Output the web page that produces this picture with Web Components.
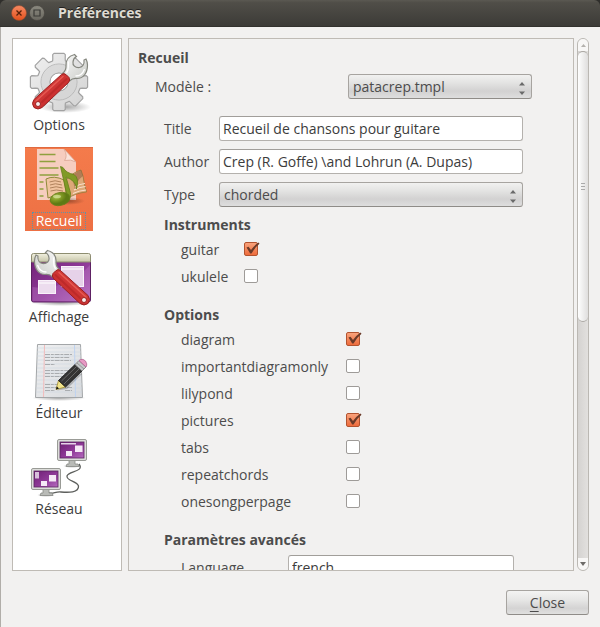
<!DOCTYPE html>
<html lang="fr">
<head>
<meta charset="utf-8">
<meta name="viewport" content="width=device-width">
<title>Préférences</title>
<style>
  html, body { margin: 0; height: 100%; background: #2f2e2b; }
  body { font: 14px/20px "Open Sans", "Noto Sans", sans-serif; color: #4c4c4c; }
</style>
</head>
<body>
<pref-window heading="Préférences">
  <pref-nav slot="nav">
    <nav-item icon="options">Options</nav-item>
    <nav-item icon="book" selected>Recueil</nav-item>
    <nav-item icon="display">Affichage</nav-item>
    <nav-item icon="editor">Éditeur</nav-item>
    <nav-item icon="network">Réseau</nav-item>
  </pref-nav>
  <scroll-frame slot="content">
    <pref-section heading="Recueil" level="1">
      <select-row label="Modèle :" value="patacrep.tmpl" compact></select-row>
    </pref-section>
    <pref-section class="fields">
      <text-row label="Title" value="Recueil de chansons pour guitare"></text-row>
      <text-row label="Author" value="Crep (R. Goffe) \and Lohrun (A. Dupas)"></text-row>
      <select-row label="Type" value="chorded"></select-row>
    </pref-section>
    <pref-section heading="Instruments" level="2" style="--label-width: 63px">
      <check-row label="guitar" checked></check-row>
      <check-row label="ukulele"></check-row>
    </pref-section>
    <pref-section heading="Options" level="2" style="--label-width: 165px">
      <check-row label="diagram" checked></check-row>
      <check-row label="importantdiagramonly"></check-row>
      <check-row label="lilypond"></check-row>
      <check-row label="pictures" checked></check-row>
      <check-row label="tabs"></check-row>
      <check-row label="repeatchords"></check-row>
      <check-row label="onesongperpage"></check-row>
    </pref-section>
    <pref-section heading="Paramètres avancés" level="2" style="--label-width: 107px; --heading-gap: 5px">
      <text-row label="Language" value="french"></text-row>
    </pref-section>
  </scroll-frame>
  <push-button slot="actions" mnemonic="C">lose</push-button>
</pref-window>

<script>
const define = (name, html, setup) => customElements.define(name, class extends HTMLElement {
  connectedCallback() {
    if (this.shadowRoot) return;
    const root = this.attachShadow({ mode: 'open' });
    root.innerHTML = typeof html === 'function' ? html(this) : html;
    if (setup) setup(this, root);
  }
});

/* Gear outline with eight teeth around (cx, cy). */
function gear(cx, cy) {
  const pts = [];
  for (let i = 0; i < 8; i++) {
    const a = i * 45;
    for (const [r, d] of [[22, -17], [24, -15], [28, -13], [29, -10], [29, 10], [28, 13], [24, 15], [22, 17]]) {
      const t = (a + d) * Math.PI / 180;
      pts.push((cx + r * Math.sin(t)).toFixed(1) + ' ' + (cy - r * Math.cos(t)).toFixed(1));
    }
  }
  return 'M' + pts.join('L') + 'Z';
}

const wrench = `
  <path d="M49.5 3.5C44 5 40.5 9 41 15C41.200 18 40.500 20 37.500 22.500L44.500 30C47 27.500 49 27 52 27.500C58.500 27.500 62.500 22 62.500 14C62.500 11.500 62 10 61 8L59 9C59.500 13 57.500 16 54.500 16.500C50 17 47.500 14 48 11C48.200 8.500 49.500 6.500 51.500 5.500Z" fill="url(#steel)" stroke="#85877f" stroke-width="1.200"/>
  <path d="M43.500 10.500C43 15 44.500 17.500 41.500 22M59.500 18C58 22.500 55 25 50.500 25" fill="none" stroke="#fff" stroke-width="1.300"/>
  <path d="M36.500 23.500Q39 21.500 41.500 24L44 26.500Q45.500 29 43.500 31.500L17 56.500Q13 59.500 9 56.500Q6 52.500 9 48.500Z" fill="url(#red)" stroke="#9c2020" stroke-width="1"/>
  <path d="M38 25.500L11 50" fill="none" stroke="#ef6a60" stroke-width="1.500" stroke-linecap="round" opacity=".7"/>
  <path d="M41.500 28L17 51" fill="none" stroke="#981717" stroke-width="2" stroke-linecap="round" opacity=".3"/>
  <circle cx="13" cy="53" r="2.500" fill="#f6eded" stroke="#9d2020"/>`;

const defs = `<defs>
  <linearGradient id="steel" x1="0" y1="0" x2="1" y2="1"><stop offset="0" stop-color="#fafafa"/><stop offset="1" stop-color="#c9cbc6"/></linearGradient>
  <linearGradient id="red" x1="0" y1="0" x2="1" y2="1"><stop offset="0" stop-color="#dc4a44"/><stop offset=".6" stop-color="#cb3030"/><stop offset="1" stop-color="#b02424"/></linearGradient>
  <linearGradient id="gear" x1="0" y1="0" x2="1" y2="1"><stop offset="0" stop-color="#f0f0f0"/><stop offset="1" stop-color="#d2d2d2"/></linearGradient>
  <linearGradient id="purple" x1="0" y1="0" x2="1" y2="1"><stop offset="0" stop-color="#6e1f74"/><stop offset=".55" stop-color="#8f3a98"/><stop offset="1" stop-color="#b46abd"/></linearGradient>
  <linearGradient id="cream" x1="0" y1="0" x2="0" y2="1"><stop offset="0" stop-color="#f1f0df"/><stop offset="1" stop-color="#c6c5a8"/></linearGradient>
  <radialGradient id="shade"><stop offset="0" stop-color="#000" stop-opacity=".35"/><stop offset="1" stop-color="#000" stop-opacity="0"/></radialGradient>
  <radialGradient id="note" cx=".35" cy=".3"><stop offset="0" stop-color="#a9c04a"/><stop offset=".6" stop-color="#7b9420"/><stop offset="1" stop-color="#5f7a14"/></radialGradient>
  <linearGradient id="paper" x1="0" y1="0" x2="1" y2="1"><stop offset="0" stop-color="#f0f1f2"/><stop offset="1" stop-color="#d8dadd"/></linearGradient>
</defs>`;

const monitor = (x, y) => `<g transform="translate(${x} ${y})">
  <ellipse cx="15" cy="27" rx="9" ry="2" fill="url(#shade)"/>
  <path d="M12 21h6v4h3l1 2.500H9L10 25h2Z" fill="#b9bbb7" stroke="#888a85" stroke-width=".8"/>
  <rect x=".5" y=".5" width="29" height="21" rx="1.500" fill="#dcddda" stroke="#999b96"/>
  <rect x="3" y="3" width="24" height="16" fill="url(#purple)" stroke="#5a2460" stroke-width=".8"/>`;

const icons = {
  options: `<ellipse cx="40" cy="56" rx="26" ry="6" fill="url(#shade)"/>
    <path d="${gear(34, 31)}M43 31A9 9 0 1 0 25 31A9 9 0 1 0 43 31Z" fill="url(#gear)" fill-rule="evenodd" stroke="#a2a2a2" stroke-width="1.200" stroke-linejoin="round"/>
    <circle cx="34" cy="31" r="18" fill="none" stroke="#b8b8b8"/>
    <circle cx="34" cy="31" r="13.500" fill="none" stroke="#d2d2d2" stroke-width="8" opacity=".6"/>
    <circle cx="34" cy="31" r="9" fill="#fff" stroke="#a8a8a8"/>${wrench}`,
  book: `<path d="M12 2H39L51 15V53H12Z" fill="#f6cdbf"/>
    <path d="M39 2Q43 9 39.500 13.500Q46 12 51 15Z" fill="#fbe3da" stroke="#d9a592" stroke-width=".8"/>
    <path d="M14.500 7.500H30.500M14.500 14.500H30.500M14.500 21H33.500M14.500 28H33.500M14.500 35H18.500M14.500 42H18.500M14.500 49H18.500" stroke="#8fa03e" stroke-width="1.500"/>
    <ellipse cx="42" cy="54" rx="18" ry="4" fill="url(#shade)"/>
    <path d="M21 32Q29 28 39 33L42 51Q31 47 23 51Z" fill="#f0c39f" stroke="#8f8a3a"/>
    <path d="M40 34Q48 25 56 23L58 29Q59 37 61.500 45Q50 46 42 52Z" fill="#dda878" stroke="#94793a" stroke-width=".8"/>
    <path d="M47 29Q51 25 56 23L58 29Q51 34 50 43Z" fill="#8a5a3a" opacity=".55"/>
    <path d="M50 40Q54 37 60 36.500M49 43Q54 40 60.500 39.500M48 46.500Q54 43.500 61 43" fill="none" stroke="#fbe3cf" stroke-width="1.200"/>
    <path d="M24.500 35Q30 32.500 36 35M25 38Q30 35.500 37 38M25 41Q31 38.500 37.500 41M25.500 44Q31 42 38 44" fill="none" stroke="#a87a55" stroke-width=".9"/>
    <path d="M35.500 19.500L38 20.500Q41 26 49 27.500Q54.500 31 51.500 42Q51.500 34 41 30L45.500 46Q46 54 39 57L34 49L41.500 46Z" fill="#809a26" stroke="#66801a" stroke-width=".8" stroke-linejoin="round"/>
    <ellipse cx="35" cy="52" rx="10" ry="6.500" transform="rotate(-12 35 52)" fill="url(#note)" stroke="#66801a" stroke-width=".8"/>
    <ellipse cx="32" cy="49.500" rx="4" ry="1.800" fill="#e2edb0" opacity=".6"/>`,
  display: `<ellipse cx="36" cy="60" rx="30" ry="3" fill="url(#shade)"/>
    <rect x="6.500" y="11.500" width="59" height="47.500" rx="2" fill="url(#purple)" stroke="#5d2163"/>
    <path d="M7.500 44Q42 48 65 22V58H7.500Z" fill="#c787cf" opacity=".3"/>
    <path d="M6.500 19V12.500Q6.500 10.500 8.500 10.500H63.500Q65.500 10.500 65.500 12.500V19Z" fill="url(#cream)" stroke="#8d8d70"/>
    <rect x="13.500" y="37.500" width="17" height="13" fill="#ecdcee" stroke="#f9f2fa"/><rect x="36.500" y="23.500" width="22" height="20" fill="#e6d2e9" stroke="#f9f2fa"/>
    <path d="M14 40H30M37 26H58" stroke="#fff"/>
    <g transform="matrix(-1 0 0 1 72 4)">${wrench}</g>`,
  editor: `<ellipse cx="34" cy="59" rx="27" ry="3" fill="url(#shade)"/>
    <path d="M12.500 5.500H55.500L57.500 58.500H10.500Z" fill="url(#paper)" stroke="#a3a6a8"/>
    <path d="M12 9H56M12 13H56M12 17H56M12 21H56M12 25H56M12 29H56M12 33H56M12 37H56M12 41H56M12 45H57M11 49H57M11 53H57" stroke="#cdd6e0" stroke-width=".6"/>
    <path d="M19.500 6L18.500 58" stroke="#f2bcbc"/><path d="M49.500 6L50.500 58" stroke="#bfd3f1"/>
    <path d="M20 15.500H47M20 18.500H45M20 21.500H46M20 25.500H30M20 31.500H46M20 34.500H44M20 37.500H38M20 45.500H40M20 48.500H36M20 51.500H30M42 48.500H47M40 51.500H47" stroke="#a9acaf" stroke-width="1.200" stroke-dasharray="5 .8 3 .8"/>
    <path d="M32 51.500L42 50L57 35L53 34Z" fill="#000" opacity=".2"/>
    <path d="M31 50.500L33.500 41.500L40.500 48Z" fill="#f1e48a" stroke="#a08a2c" stroke-width=".8"/><path d="M31 50.500L31.800 47.500L34 49.600Z" fill="#111"/>
    <path d="M33.500 41.500L50 25.500L57 32L40.500 48Z" fill="#343434" stroke="#171717" stroke-width=".8"/><path d="M36.500 42L51.500 27.500M39 45L54 30" stroke="#666" stroke-width="1"/>
    <path d="M50 25.500L54 21.500L61 28L57 32Z" fill="#c4c7c9" stroke="#777" stroke-width=".8"/><path d="M52 24L59 30" stroke="#999"/>
    <path d="M54 21.500L55.500 20.500Q58 19.500 60.500 22Q62.500 25 61.500 27.500L61 28Z" fill="#e79ac4" stroke="#b46592" stroke-width=".8"/>`,
  network: `<path d="M54 29C60 37 43 36 42 41C41 46 52 46 53.500 51C54 58 43 57.500 36 57C30 56.500 29 59 24 58" fill="none" stroke="#5d5f5c" stroke-width="1.300"/>
    ${monitor(32, 4)}<rect x="4" y="4" width="15" height="1.500" fill="#e5d2e8"/><rect x="18" y="6.500" width="7.500" height="6.500" fill="#f5e9f6"/><rect x="9" y="12" width="6" height="5" fill="#f5e9f6"/></g>
    ${monitor(6, 33)}<rect x="4" y="4" width="4" height="6.500" fill="#d8bedc"/><rect x="18" y="7" width="7" height="6.500" fill="#f5e9f6"/><rect x="10" y="13" width="6" height="5" fill="#f5e9f6"/></g>`
};

define('pref-window', el => `<style>
  :host { display: flex; flex-direction: column; height: 100vh; }
  header { display: flex; align-items: center; height: 27px; box-sizing: border-box; padding: 0 11px; border-radius: 6px 6px 0 0;
    background: linear-gradient(#5b5952, #504e48 10%, #3c3b37); border-bottom: 1px solid #33322e; }
  header button { padding: 0; border: 0; background: none; width: 16px; height: 16px; margin-right: 2px; }
  header svg { display: block; }
  h1 { margin: 0 0 0 11px; font-size: 14px; line-height: 20px; color: #dfdbd2; text-shadow: 0 -1px #22211f; }
  main { flex: 1; min-height: 0; display: flex; flex-direction: column; padding: 11px 11px 12px; background: #f2f1f0; border-left: 1px solid #b1aea9; }
  .body { flex: 1; min-height: 0; display: flex; gap: 6px; }
  footer { display: flex; justify-content: flex-end; padding-top: 19px; }
  ::slotted([slot=content]) { flex: 1; min-width: 0; }
</style>
<header>
  <button aria-label="Fermer"><svg width="16" height="16"><defs><linearGradient id="o" x2="0" y2="1"><stop stop-color="#f68a63"/><stop offset="1" stop-color="#e2501c"/></linearGradient></defs><circle cx="8" cy="8" r="7.500" fill="url(#o)" stroke="#8a4a30" stroke-width=".6"/><path d="M5.500 5.500l5 5m0-5l-5 5" stroke="#562009" stroke-width="1.300"/></svg></button>
  <button aria-label="Agrandir"><svg width="16" height="16"><defs><linearGradient id="g" x2="0" y2="1"><stop stop-color="#8b897f"/><stop offset="1" stop-color="#69675f"/></linearGradient></defs><circle cx="8" cy="8" r="7.500" fill="url(#g)" stroke="#44423c" stroke-width=".6"/><path d="M5 5h6v6h-6z" fill="none" stroke="#3b3a36" stroke-width="1.200"/></svg></button>
  <h1>${el.getAttribute('heading')}</h1>
</header>
<main><div class="body"><slot name="nav"></slot><slot name="content"></slot></div><footer><slot name="actions"></slot></footer></main>`);

define('pref-nav', `<style>
  :host { display: block; width: 110px; box-sizing: border-box; border: 1px solid #bfbbb5; background: #fff; }
  nav { display: flex; flex-direction: column; gap: 12px; padding: 12px; }
</style><nav aria-label="Sections"><slot></slot></nav>`);

define('nav-item', el => `<style>
  :host { display: block; width: 68px; color: #3c3c3c; }
  :host([selected]) { color: #fff; }
  button { display: flex; flex-direction: column; align-items: center; width: 100%; padding: 0; border: 0; background: none; font: inherit; color: inherit; }
  :host([selected]) button { background: linear-gradient(#f47b4b, #ed7044); border-top: 1px solid #e06a40; }
  svg { display: block; width: 68px; height: 64px; }
  :host([selected]) svg { height: 63px; }
  :host([selected]) span { outline: 1px dotted #5f93a8; outline-offset: -2px; padding: 0 5px; }
</style>
<button><svg viewBox="0 0 68 64" preserveAspectRatio="xMidYMax slice" aria-hidden="true">${defs}${icons[el.getAttribute('icon')]}</svg><span><slot></slot></span></button>`);

define('scroll-frame', `<style>
  :host { display: flex; gap: 3px; min-height: 0; }
  .view { flex: 1; min-width: 0; overflow: hidden; border: 1px solid #bfbbb5; padding: 9px 41px 0 9px; }
  .bar { width: 12px; box-sizing: border-box; display: flex; flex-direction: column; border: 1px solid #bbb8b3; border-radius: 6px; background: linear-gradient(90deg, #d5d3d1, #e2e0de); overflow: hidden; }
  button { display: grid; place-items: center; padding: 0; border: 0; height: 12px; background: #f8f7f6; }
  .thumb { flex: 0 0 51%; box-sizing: border-box; display: grid; place-items: center; border: solid #aaa7a2; border-width: 1px 0; border-radius: 6px; background: linear-gradient(90deg, #fefefe, #dfdedd); }
  .fill { flex: 1; }
  svg { display: block; }
</style>
<div class="view"><slot></slot></div>
<div class="bar">
  <button aria-label="Défiler vers le haut"><svg width="5" height="3"><path d="M0 3L2.500 0L5 3Z" fill="#b5b2ae"/></svg></button>
  <div class="thumb"><svg width="4" height="8"><path d="M0 1.500h4M0 4.500h4M0 7.500h4" stroke="#aaa"/></svg></div>
  <div class="fill"></div>
  <button aria-label="Défiler vers le bas"><svg width="6" height="4"><path d="M0 0H6L3 4Z" fill="#6d6b68"/></svg></button>
</div>`);

define('pref-section', el => {
  const lv = el.getAttribute('level');
  return `<style>
  :host { display: block; }
  :host([level="2"]) { padding: 0 9px 0 26px; margin-bottom: 15px; }
  :host([level="1"]) { margin-bottom: 17px; }
  :host(.fields) { padding: 0 9px 0 26px; --label-width: 55px; margin-bottom: 8px; }
  :host(.fields) .rows { display: grid; gap: 8px; }
  h2 { margin: 0 0 6px; font-size: 14px; line-height: 20px; font-weight: 700; }
  :host([level="1"]) .rows { padding-left: 17px; }
  :host([level="2"]) .rows { padding: 0 9px 0 17px; }
  :host([level="2"]) h2 { margin-bottom: var(--heading-gap, 1px); }
</style>${lv ? `<h2>${el.getAttribute('heading')}</h2>` : ''}<div class="rows"><slot></slot></div>`;
});

const rowStyle = `
  :host { display: grid; grid-template-columns: var(--label-width, 1fr) 1fr; align-items: center; }
  label { white-space: nowrap; }`;

define('text-row', el => `<style>${rowStyle}
  input { width: 100%; height: 25px; box-sizing: border-box; padding: 0 3px; font: inherit; color: #3c3c3c; background: #fff;
    border: 1px solid #b4b1ad; border-top-color: #a19e9a; border-radius: 3px; outline: 0; }
</style><label for="f">${el.getAttribute('label')}</label><input id="f" type="text">`,
  (el, root) => { root.querySelector('input').value = el.getAttribute('value'); });

define('select-row', el => `<style>${rowStyle}
  :host([compact]) { grid-template-columns: 1fr 184px; }
  .box { display: grid; grid-template-columns: 1fr 18px; align-items: center; }
  select { grid-area: 1 / 1 / 2 / 3; appearance: none; width: 100%; height: 25px; box-sizing: border-box; padding: 0 20px 0 4px; font: inherit; color: inherit;
    border: 1px solid #a7a4a0; border-bottom-color: #8f8c88; border-radius: 3px; background: linear-gradient(#f1f1f0, #e3e3e2 35%, #d2d1d1 70%, #dedede); }
  svg { grid-area: 1 / 2; pointer-events: none; margin-top: 3px; margin-left: 5px; }
</style><label for="f">${el.getAttribute('label')}</label>
<div class="box"><select id="f"><option>${el.getAttribute('value')}</option></select>
<svg width="6" height="13" aria-hidden="true"><path d="M0 3.500L3 0L6 3.500ZM0 9.500H6L3 13Z" fill="#6a6a6a"/></svg></div>`);

define('check-row', el => `<style>${rowStyle}
  :host { height: 27px; }
  .box { display: grid; grid-template-columns: 17px; align-items: center; padding-bottom: 2px; }
  input { grid-area: 1 / 1; appearance: none; margin: 0; width: 14px; height: 14px; box-sizing: border-box; border: 1px solid #9e9b98; border-radius: 2px; background: #fff; }
  input:checked { background: linear-gradient(#f9a27b, #ee6c3c); border-color: #b2532f; }
  svg { grid-area: 1 / 1; pointer-events: none; visibility: hidden; }
  input:checked + svg { visibility: visible; }
</style><label for="f">${el.getAttribute('label')}</label>
<div class="box"><input id="f" type="checkbox" ${el.hasAttribute('checked') ? 'checked' : ''}>
<svg width="17" height="14" aria-hidden="true"><path d="M2.500 5.500L4.500 4.800L7 8Q10 3.500 14.500 .5L15.500 1.800Q10.500 6 7.500 11.500H6.200Z" fill="#6b3a28"/></svg></div>`);

define('push-button', el => `<style>
  :host { display: block; }
  button { width: 83px; height: 25px; padding: 0; font: inherit; color: inherit; border: 1px solid #a7a4a0; border-bottom-color: #8f8c88; border-radius: 3px;
    background: linear-gradient(#f4f4f3, #e6e6e5 40%, #d4d3d3 75%, #e0e0df); }
  u { text-underline-offset: 3px; }
</style><button><u>${el.getAttribute('mnemonic')}</u><slot></slot></button>`);
</script>
</body>
</html>
